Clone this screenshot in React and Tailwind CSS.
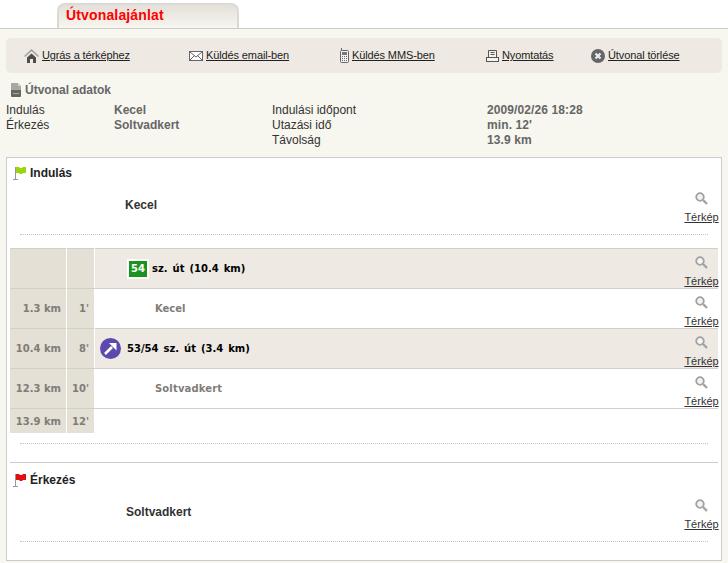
const arial = "font-['Liberation_Sans',Arial,sans-serif]"
const verdana = "font-['DejaVu_Sans',Verdana,sans-serif]"

function HomeIcon() {
  return (
    <svg width="15" height="15" viewBox="0 0 15 15" className="shrink-0">
      <path d="M0 8 7.500 1 15 8l-1 1-6.500-5.800L1 9z" fill="#a5a39f" />
      <path d="M3 9.500 7.500 5.500 12 9.500V15H9V11H6v4H3z" fill="#4f4d49" />
    </svg>
  )
}

function MailIcon() {
  return (
    <svg width="14" height="10" viewBox="0 0 14 10" className="shrink-0">
      <rect x="0.500" y="0.500" width="13" height="9" fill="#fff" stroke="#666" />
      <path d="M1 1l6 5 6-5M1 9l4.500-4.500M13 9 8.500 4.500" fill="none" stroke="#666" />
    </svg>
  )
}

function PhoneIcon() {
  return (
    <svg width="9" height="15" viewBox="0 0 9 15" className="shrink-0">
      <path d="M1.500 0v3" stroke="#666" />
      <rect x="0.500" y="2.500" width="8" height="12" rx="1" fill="#f5f3ef" stroke="#666" />
      <rect x="2" y="4" width="5" height="3" fill="#777" />
      <path d="M2 8.500h1M4 8.500h1M6 8.500h1M2 10.500h1M4 10.500h1M6 10.500h1M2 12.500h1M4 12.500h1M6 12.500h1" stroke="#666" />
    </svg>
  )
}

function PrintIcon() {
  return (
    <svg width="13" height="12" viewBox="0 0 13 12" className="shrink-0">
      <path d="M2.500 7V0.500h8V7M4.500 2.500h4M4.500 4.500h4" fill="#f5f3ef" stroke="#555" />
      <rect x="0.500" y="7.500" width="12" height="4" fill="#f5f3ef" stroke="#555" />
    </svg>
  )
}

function CloseIcon() {
  return (
    <svg width="14" height="14" viewBox="0 0 14 14" className="shrink-0">
      <circle cx="7" cy="7" r="7" fill="#666" />
      <path d="M4.500 4.500l5 5M9.500 4.500l-5 5" stroke="#eee" strokeWidth="2.200" />
    </svg>
  )
}

function DocIcon() {
  return (
    <svg width="12" height="14" viewBox="0 0 12 14" className="shrink-0">
      <path d="M1 0h7l3 3v4H1z" fill="#a8a7a2" />
      <path d="M8 0v3h3z" fill="#d6d5d0" />
      <path d="M1 7h10v6q0 1-1 1H2q-1 0-1-1z" fill="#666560" />
      <path d="M3 10.500h6" stroke="#a8a7a2" />
    </svg>
  )
}

function Flag({ color }) {
  return (
    <svg width="14" height="14" viewBox="0 0 14 14" className="shrink-0">
      <path d="M2.500 1v12.500M0 13.500h5" stroke="#999" fill="none" />
      <path d="M3 1H6L7 2H9L10 1H13V7H10L9 8H7L6 7H3z" fill={color} />
    </svg>
  )
}

function Loupe() {
  return (
    <svg width="13" height="13" viewBox="0 0 13 13">
      <circle cx="5" cy="5" r="3.800" fill="#f4f4f4" stroke="#a3a3a3" strokeWidth="1.800" />
      <path d="M8 8l4 4" stroke="#a3a3a3" strokeWidth="2.400" />
    </svg>
  )
}

function MapLink({ className }) {
  return (
    <div className={`w-[33px] shrink-0 flex flex-col items-center ${arial} text-[11px] leading-[13px] text-[#333] ${className}`}>
      <div className="h-[13px] mb-[6px]"><Loupe /></div>
      <a className="underline">Térkép</a>
    </div>
  )
}

function ToolLink({ icon, label, className }) {
  return (
    <a className={`flex items-center gap-[3px] ${className}`}>
      {icon}
      <span className="underline">{label}</span>
    </a>
  )
}

function InfoRow({ a, b, c, d }) {
  return (
    <div className="flex h-[15px] leading-[15px]">
      <div className="w-[108px]">{a}</div>
      <div className="w-[158px] font-bold text-[#666]">{b}</div>
      <div className="w-[215px]">{c}</div>
      <div className="font-bold text-[#666] tracking-[0.1px]">{d}</div>
    </div>
  )
}

function Dotted({ className }) {
  return <div className={`h-px border-t border-dotted border-[#c4c4c4] mx-[10px] ${className}`} />
}

function RouteRow({ dist, time, shaded, last, children }) {
  return (
    <div className={`flex ${last ? 'h-[25px]' : 'h-10'}`}>
      <div className="w-14 bg-[#e4e0d6] flex items-center justify-end pr-[5px] text-[#807c78] font-bold border-t border-[#d0cfca]">{dist}</div>
      <div className="w-[27px] ml-px bg-[#e4e0d6] flex items-center justify-end pr-[5px] text-[#807c78] font-bold border-t border-[#d0cfca]">{time}</div>
      <div className={`flex-1 flex border-t border-[#d0cfca] ${shaded ? 'bg-[#eee9e3] ml-px' : 'bg-white'}`}>
        {children}
      </div>
    </div>
  )
}

export default function App() {
  return (
    <div className={`w-[728px] h-[563px] overflow-hidden bg-[#f7f6ef] ${arial} text-[12px] text-[#333]`}>
      <div className="h-[29px] bg-white border-b border-[#ccc] pl-[57px] pt-[3px]">
        <div className="w-[182px] h-[25px] rounded-t-[8px] border-2 border-b-0 border-[#dcdad6] bg-gradient-to-b from-[#e4dfd9] to-[#f7f6ef] pl-[7px] text-[14px] tracking-[0.15px] leading-[21px] font-bold text-[#f00]">
          Útvonalajánlat
        </div>
      </div>

      <div className="mx-[6px] mt-[9px] h-[35px] rounded-[5px] bg-[#eee9e3] flex items-center text-[11px] tracking-[-0.12px] text-[#222]">
        <ToolLink className="ml-[18px] w-[165px]" icon={<HomeIcon />} label="Ugrás a térképhez" />
        <ToolLink className="w-[151px]" icon={<MailIcon />} label="Küldés email-ben" />
        <ToolLink className="w-[146px]" icon={<PhoneIcon />} label="Küldés MMS-ben" />
        <ToolLink className="w-[105px]" icon={<PrintIcon />} label="Nyomtatás" />
        <ToolLink icon={<CloseIcon />} label="Útvonal törlése" />
      </div>

      <div className="flex items-center gap-[3px] ml-[10px] mt-[9px] h-[16px] font-bold text-[#666]">
        <DocIcon />
        Útvonal adatok
      </div>
      <div className="ml-[6px] mt-[5px]">
        <InfoRow a="Indulás" b="Kecel" c="Indulási időpont" d="2009/02/26 18:28" />
        <InfoRow a="Érkezés" b="Soltvadkert" c="Utazási idő" d="min. 12'" />
        <InfoRow c="Távolság" d="13.9 km" />
      </div>

      <div className="mx-[6px] mt-[9px] h-[404px] bg-white border border-[#ccc] px-[3px]">
        <div className="flex items-center gap-[3px] ml-[3px] mt-[7px] h-[16px] font-bold text-[#222]">
          <Flag color="#9ad60a" />
          Indulás
        </div>
        <div className="flex justify-between mt-[2px] h-[42px] items-end">
          <div className="ml-[115px] mb-[11px] font-bold text-[#333]">Kecel</div>
          <MapLink className="pb-[1px]" />
        </div>
        <Dotted className="mt-[9px]" />

        <div className={`mt-[13px] ${verdana} text-[10px] text-black`}>
          <RouteRow shaded>
            <div className="flex-1 flex items-center font-bold pl-[32px] [word-spacing:1.5px]">
              <span className="w-[22px] h-[20px] mr-[3px] bg-[#1c921f] border-2 border-white text-white text-[10px] leading-[16px] text-center">54</span>
              sz. út (10.4 km)
            </div>
            <MapLink className="pt-[7px]" />
          </RouteRow>
          <RouteRow dist="1.3 km" time="1'">
            <div className="flex-1 self-center font-bold pl-[61px] text-[#807c78]">Kecel</div>
            <MapLink className="pt-[7px]" />
          </RouteRow>
          <RouteRow dist="10.4 km" time="8'" shaded>
            <div className="flex-1 flex items-center font-bold pl-[5px] [word-spacing:1.5px]">
              <svg width="21" height="21" viewBox="0 0 21 21" className="mr-[6px] shrink-0">
                <circle cx="10.500" cy="10.500" r="10.500" fill="#5b49ad" />
                <path d="M5 16 12 9" stroke="#fff" strokeWidth="2.600" />
                <path d="M9 5h7.500v7.500z" fill="#fff" />
              </svg>
              53/54 sz. út (3.4 km)
            </div>
            <MapLink className="pt-[7px]" />
          </RouteRow>
          <RouteRow dist="12.3 km" time="10'">
            <div className="flex-1 self-center font-bold pl-[61px] text-[#807c78] tracking-[0.15px]">Soltvadkert</div>
            <MapLink className="pt-[7px]" />
          </RouteRow>
          <RouteRow dist="13.9 km" time="12'" last />
        </div>

        <Dotted className="mt-[10px]" />
        <div className="h-px bg-[#ccc] mt-[18px]" />

        <div className="flex items-center gap-[3px] ml-[3px] mt-[9px] h-[16px] font-bold text-[#222]">
          <Flag color="#e01010" />
          Érkezés
        </div>
        <div className="flex justify-between mt-[2px] h-[42px] items-end">
          <div className="ml-[116px] mb-[11px] font-bold text-[#333]">Soltvadkert</div>
          <MapLink className="pb-[1px]" />
        </div>
        <Dotted className="mt-[9px]" />
      </div>
    </div>
  )
}
